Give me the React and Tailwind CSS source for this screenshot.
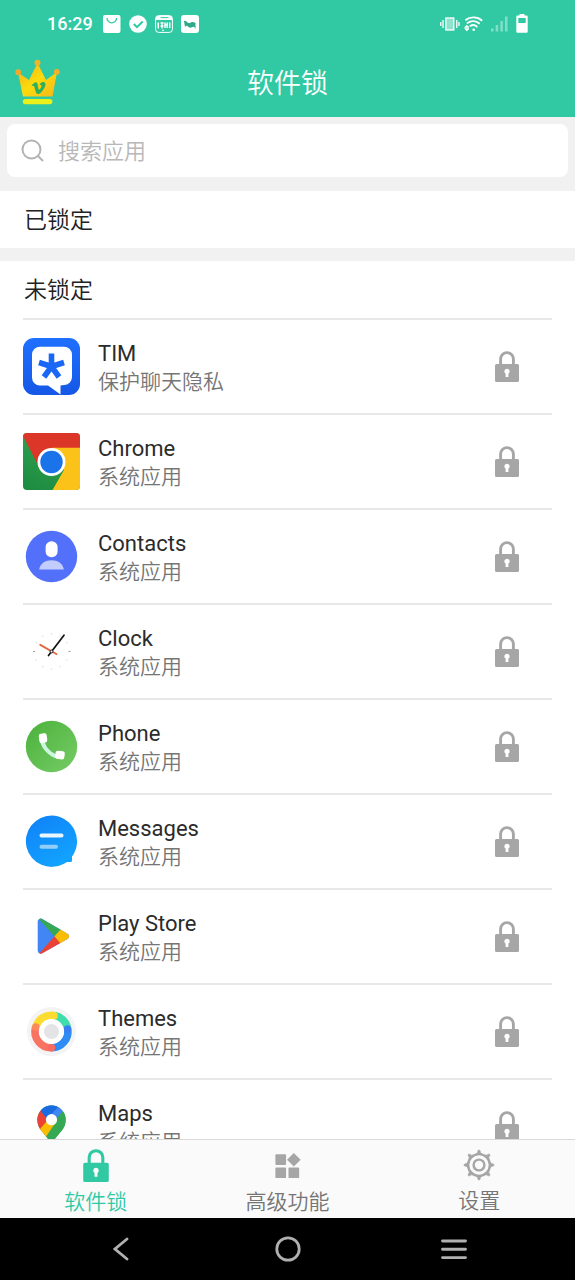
import { FaVimeoV } from "react-icons/fa";

function Crown() {
  return (
    <svg width="46" height="46" viewBox="0 0 46 46" aria-hidden="true">
      <defs>
        <linearGradient id="gold" x1="0" y1="0" x2="1" y2="1">
          <stop offset="0" stopColor="#f5a623" />
          <stop offset="0.5" stopColor="#fbdc0c" />
          <stop offset="1" stopColor="#f7b51a" />
        </linearGradient>
      </defs>
      <path d="M3 13.5 L14 21 L22.5 4 L31 21 L42 13 L37.5 37.5 H8 Z" fill="url(#gold)" />
      <circle cx="3.2" cy="13.2" r="2.9" fill="#f3a72c" />
      <circle cx="22.5" cy="3.8" r="3" fill="#f0b429" />
      <circle cx="41.8" cy="12.8" r="2.9" fill="#f3b02c" />
      <rect x="7.8" y="40" width="29.6" height="5.2" rx="2.6" fill="#e9f01c" />
      <FaVimeoV x="15.5" y="21" width="14.5" height="15.5" color="#2fae5d" />
    </svg>
  );
}

function Lock({ className }) {
  return (
    <svg viewBox="0 0 24 31" className={className} fill="none" aria-hidden="true">
      <path d="M5.6 14 V8 a6.4 6.4 0 0 1 12.8 0 V14" stroke="currentColor" strokeWidth="2.9" />
      <path
        fillRule="evenodd"
        fill="currentColor"
        d="M1.5 13 H22.5 a1.5 1.5 0 0 1 1.5 1.5 V29.5 a1.5 1.5 0 0 1 -1.5 1.5 H1.5 a1.5 1.5 0 0 1 -1.5 -1.5 V14.5 a1.5 1.5 0 0 1 1.5 -1.5 Z M12 17.7 a2.6 2.6 0 0 0 -1.4 4.8 V26 h2.8 V22.5 A2.6 2.6 0 0 0 12 17.7 Z"
      />
    </svg>
  );
}

function StatusBar() {
  return (
    <div className="flex h-[47px] items-center justify-between px-[47px] text-white">
      <div className="flex items-center gap-2">
        <span className="mr-0.5 text-[18px] font-medium">16:29</span>
        <svg width="18" height="18" viewBox="0 0 18 18" aria-hidden="true">
          <rect width="17.5" height="18" rx="2" fill="#fff" />
          <path d="M4 3 a4.8 4.8 0 0 0 9.6 0" fill="none" stroke="#30c9a3" strokeWidth="1.3" />
        </svg>
        <svg width="18" height="18" viewBox="0 0 18 18" aria-hidden="true">
          <circle cx="9" cy="9" r="8.8" fill="#fff" />
          <path d="M4.8 9 L8 12.2 L13.7 6.5" fill="none" stroke="#30c9a3" strokeWidth="2" />
        </svg>
        <svg width="18" height="18" viewBox="0 0 18 18" fill="none" stroke="#fff" aria-hidden="true">
          <rect x="0.6" y="0.6" width="16.8" height="16.8" rx="3" />
          <path d="M1 3 a2 2 0 0 1 2 -2 H15 a2 2 0 0 1 2 2 V5 H1 Z" fill="#fff" stroke="none" />
          <path d="M5.5 2.600 h8" stroke="#30c9a3" />
          <path d="M3.3 7.5 V13.5 M5.5 8 h3 M7 8 V13.5 M5.5 11 h3 M10 7.5 V13 M12.2 7.5 V13 M10 10 h2.200 M14.7 7.5 V13" strokeWidth="1.5" />
          <path d="M7 15.3 h2" />
        </svg>
        <svg width="18" height="18" viewBox="0 0 18 18" aria-hidden="true">
          <rect width="18" height="18" rx="3" fill="#fff" />
          <path d="M3 6 C5.5 5 6.5 9 9 8 C10.5 7 11.5 6.5 14.5 8 V14 C12.5 9.5 11 13.5 8.5 12.5 C6 11.5 6 9.5 4 12 Z" fill="#30a98a" />
        </svg>
      </div>
      <div className="flex items-center">
        <svg width="20" height="16" viewBox="0 0 20 16" fill="none" stroke="#fff" strokeWidth="1.3" aria-hidden="true">
          <rect x="5.8" y="2" width="8" height="12" fill="#8ee3cd" />
          <path d="M3 4 V12 M0.8 6 V10 M16.8 4 V12 M19 6 V10" />
        </svg>
        <svg className="ml-1" width="19" height="16" viewBox="0 0 19 16" fill="none" stroke="#fff" strokeWidth="1.9" strokeLinecap="round" aria-hidden="true">
          <path d="M2 3.8 C6 0.5 13.5 0.5 17.5 4.3 M3.5 7 C7 4.3 12 4.5 15 7.3 M6.5 9.8 C8.5 8.800 11 9 12.7 10.5" />
          <path d="M1 11 L2.8 9.5 L4.6 11 Z M1 13 L2.8 14.700 L4.6 13 Z" strokeWidth="1" fill="#fff" />
          <circle cx="9.7" cy="13.7" r="1.3" fill="#fff" stroke="none" />
        </svg>
        <svg className="ml-2" width="17" height="16" viewBox="0 0 17 16" fill="#83dec7" aria-hidden="true">
          <rect x="0" y="12.5" width="2.5" height="3" />
          <rect x="4.7" y="9" width="2.5" height="6.5" />
          <rect x="9.4" y="5" width="2.5" height="10.5" />
          <rect x="14" y="0.5" width="2.5" height="15" />
        </svg>
        <svg className="ml-2" width="12" height="19" viewBox="0 0 12 19" aria-hidden="true">
          <path fillRule="evenodd" fill="#fff" d="M3.5 0 h5 v1.5 H10.5 a1.2 1.2 0 0 1 1.2 1.2 V17.5 a1.2 1.2 0 0 1 -1.2 1.2 H1.5 a1.2 1.2 0 0 1 -1.2 -1.2 V2.7 A1.2 1.2 0 0 1 1.5 1.5 H3.5 Z M2.3 4 V9 H9.7 V4 Z" />
        </svg>
      </div>
    </div>
  );
}

function TimIcon() {
  return (
    <>
      <defs>
        <linearGradient id="tim" x1="0" y1="0" x2="0" y2="1">
          <stop offset="0" stopColor="#1f70ff" />
          <stop offset="1" stopColor="#1557e6" />
        </linearGradient>
      </defs>
      <rect width="57" height="57" rx="11" fill="url(#tim)" />
      <path d="M17 8.7 H41 a8 8 0 0 1 8 8 V39 a8 8 0 0 1 -8 8 L37.5 47.5 V56.5 L25 47.5 H17 a8 8 0 0 1 -8 -8 V16.7 a8 8 0 0 1 8 -8 Z" fill="#fff" />
      <path d="M28.5 28.5 V15.5 M28.5 28.5 L41 24.5 M28.5 28.5 L36 39 M28.5 28.5 L21 39 M28.5 28.5 L16 24.5" stroke="#1a66f5" strokeWidth="5.6" />
    </>
  );
}

function ChromeIcon() {
  return (
    <>
      <defs>
        <clipPath id="chromeClip">
          <rect width="57" height="57" rx="4" />
        </clipPath>
        <linearGradient id="chromeGreen" x1="0" y1="1" x2="0.4" y2="0">
          <stop offset="0" stopColor="#1d8a40" />
          <stop offset="1" stopColor="#2fa350" />
        </linearGradient>
      </defs>
      <g clipPath="url(#chromeClip)">
        <rect width="57" height="57" fill="url(#chromeGreen)" />
        <path d="M0 0 H57 V15 H28.5 L16 34 L0 3 Z" fill="#dc3629" />
        <path d="M28.5 14.7 H57 V57 H29.5 L41 37 Z" fill="#fbc219" />
      </g>
      <circle cx="28.5" cy="29" r="14" fill="#fff" />
      <circle cx="28.5" cy="29" r="11.2" fill="#1a73e8" />
    </>
  );
}

function ContactsIcon() {
  return (
    <>
      <circle cx="28.5" cy="28.5" r="25.7" fill="#5270fa" />
      <rect x="22.6" y="13.2" width="12" height="16" rx="5.8" fill="#fff" />
      <path d="M16.2 41.5 C17.5 29 39.5 29 40.8 41.5 Z" fill="#c3cdfd" />
    </>
  );
}

function ClockIcon() {
  return (
    <>
      <g stroke="#e3e3e3" strokeWidth="1.5">
        {[30, 60, 120, 150, 210, 240, 300, 330, 0, 180].map((angle) => (
          <path key={angle} d="M28.5 10.2 V11.6" transform={`rotate(${angle} 28.5 28.5)`} />
        ))}
      </g>
      <path d="M10 28.5 h2 M45.5 28.5 h2" stroke="#999" strokeWidth="1.2" />
      <path d="M17.3 21.8 L33.3 31" stroke="#e0673f" strokeWidth="2" strokeLinecap="round" />
      <path d="M25.5 32.5 L41 12.2" stroke="#111" strokeWidth="1.7" strokeLinecap="round" />
      <circle cx="28.5" cy="28.5" r="1.4" fill="#fff" stroke="#111" />
    </>
  );
}

function PhoneIcon() {
  return (
    <>
      <defs>
        <linearGradient id="phone" x1="0" y1="0" x2="1" y2="1">
          <stop offset="0" stopColor="#4bb13b" />
          <stop offset="1" stopColor="#76cc66" />
        </linearGradient>
      </defs>
      <circle cx="28.5" cy="28.5" r="25.7" fill="url(#phone)" />
      <path d="M16.500 19 C16.5 31 29 42 39 41 L34.5 36.5 C29 35.5 22.5 29 22 24 Z" fill="#cdf5e0" />
      <rect x="16" y="15.5" width="8" height="9.3" rx="2.2" fill="#fff" transform="rotate(-7 20 20)" />
      <rect x="32.3" y="33" width="9.3" height="8.2" rx="2.2" fill="#fff" transform="rotate(8 37 37)" />
    </>
  );
}

function MessagesIcon() {
  return (
    <>
      <defs>
        <linearGradient id="msg" x1="0" y1="0" x2="0.6" y2="1">
          <stop offset="0" stopColor="#1080f8" />
          <stop offset="1" stopColor="#12a3ff" />
        </linearGradient>
      </defs>
      <path d="M28.5 2.5 a25.7 25.7 0 1 0 12.5 48.2 L44 49 H47.5 a1.5 1.5 0 0 0 1.5 -1.5 V43.5 A25.7 25.7 0 0 0 28.5 2.5 Z" fill="url(#msg)" />
      <path d="M18.5 22.5 H38.5" stroke="#e8f6ff" strokeWidth="4" strokeLinecap="round" />
      <path d="M18.5 33.8 H33" stroke="#93cefb" strokeWidth="4" strokeLinecap="round" />
    </>
  );
}

function PlayIcon() {
  return (
    <>
      <defs>
        <clipPath id="playClip">
          <path d="M14.7 13.5 a3 3 0 0 1 4.5 -2.5 L44.5 25.8 a3 3 0 0 1 0 5.2 L19.2 45.3 a3 3 0 0 1 -4.5 -2.5 Z" />
        </clipPath>
      </defs>
      <g clipPath="url(#playClip)">
        <rect x="14" y="8" width="34" height="40" fill="#4285f4" />
        <path d="M14 9 L31.5 28.5 L50 9 Z" fill="#34a853" />
        <path d="M14 48 L31.5 28.2 L50 48 Z" fill="#ea4335" />
        <path d="M31.5 28.3 L38 21 L50 28 L37.5 35.5 Z" fill="#fbbc04" />
      </g>
    </>
  );
}

function ThemesIcon() {
  return (
    <>
      <circle cx="28.5" cy="28.5" r="24.5" fill="#f4f4f4" />
      <g fill="none" strokeWidth="7.6">
        <path d="M12.5 24.5 A16.2 16.2 0 0 0 28.5 44.7" stroke="#f97362" />
        <path d="M44.7 26 A16.2 16.2 0 0 1 28.5 44.7" stroke="#2f8cf5" />
        <path d="M31 12.5 A16.2 16.2 0 0 1 44.7 26" stroke="#3fdcae" />
        <path d="M12.8 24 A16.2 16.2 0 0 1 31 12.5" stroke="#fddc32" />
      </g>
      <circle cx="44.5" cy="26" r="3.8" fill="#3a7ff2" />
      <circle cx="31" cy="12.7" r="3.8" fill="#fddc32" />
      <circle cx="12.8" cy="24" r="3.8" fill="#fb8a5c" />
      <circle cx="28.5" cy="44.7" r="3.8" fill="#f96a62" />
      <circle cx="28.5" cy="28.5" r="12.4" fill="#fff" />
      <circle cx="28.5" cy="28.5" r="7.5" fill="#e4e4e6" />
    </>
  );
}

function MapsIcon() {
  return (
    <>
      <defs>
        <clipPath id="pinClip">
          <path d="M28.5 7.5 A14.2 14.2 0 0 1 42.7 21.7 C42.7 34 30.5 37 30 47 a1.5 1.5 0 0 1 -3 0 C26.5 37 14.3 34 14.3 21.7 A14.2 14.2 0 0 1 28.5 7.5 Z" />
        </clipPath>
      </defs>
      <g clipPath="url(#pinClip)">
        <rect x="12" y="5" width="33" height="45" fill="#34a853" />
        <path d="M10 33 L16 11 L28.5 22 L20 31 L17 34 L12 32 Z" fill="#ea4335" />
        <path d="M16.5 31.5 L28.5 18 L35 25 L22 40 Z" fill="#fbbc04" />
        <path d="M22.5 39.5 L41 12 L48 20 L40 50 L24 50 Z" fill="#34a853" />
        <path d="M16 11 L28.5 3 L41 12 L30 24 Z" fill="#4285f4" />
        <path d="M16 11 L28.5 3 L35 9 L24 21 Z" fill="#1a6ae0" />
      </g>
      <circle cx="28.5" cy="21.7" r="5.6" fill="#fff" />
    </>
  );
}

const apps = [
  { name: "TIM", note: "保护聊天隐私", Icon: TimIcon },
  { name: "Chrome", note: "系统应用", Icon: ChromeIcon },
  { name: "Contacts", note: "系统应用", Icon: ContactsIcon },
  { name: "Clock", note: "系统应用", Icon: ClockIcon },
  { name: "Phone", note: "系统应用", Icon: PhoneIcon },
  { name: "Messages", note: "系统应用", Icon: MessagesIcon },
  { name: "Play Store", note: "系统应用", Icon: PlayIcon },
  { name: "Themes", note: "系统应用", Icon: ThemesIcon },
  { name: "Maps", note: "系统应用", Icon: MapsIcon },
];

function AppRow({ name, note, Icon }) {
  return (
    <li className="flex h-[95px] items-center border-t-2 border-[#e8e8e8]">
      <svg width="57" height="57" viewBox="0 0 57 57" className="shrink-0" aria-hidden="true">
        <Icon />
      </svg>
      <div className="ml-[18px] min-w-0 flex-1 pt-0.5">
        <p className="truncate text-[22px] leading-[29px] text-[#2b2b2b]">{name}</p>
        <p className="truncate text-[21px] leading-[29px] font-[350] text-[#757575]">{note}</p>
      </div>
      <button type="button" aria-label={name} className="flex h-full w-[90px] items-center justify-center text-[#a6a6a6]">
        <Lock className="h-[31px] w-6" />
      </button>
    </li>
  );
}

function Tab({ label, active, children }) {
  return (
    <button
      type="button"
      className={`flex flex-1 flex-col items-center gap-[5px] pt-[9px] ${active ? "text-[#30c9a3]" : "text-[#a6a6a6]"}`}
    >
      {children}
      <span className={`text-[21px] leading-[31px] font-[350] ${active ? "" : "text-[#757575]"}`}>{label}</span>
    </button>
  );
}

export default function App() {
  return (
    <div className="flex h-screen flex-col overflow-hidden bg-[#f1f1f1] font-['Roboto','Noto_Sans_CJK_SC',sans-serif]">
      <header className="shrink-0 bg-[#30c9a3]">
        <StatusBar />
        <div className="grid h-[70px] grid-cols-[61px_1fr_61px] items-center">
          <button type="button" aria-label="VIP" className="pl-[15px]">
            <Crown />
          </button>
          <h1 className="pt-1 text-center text-[27px] leading-[40px] font-[350] text-white">软件锁</h1>
        </div>
      </header>

      <main className="min-h-0 flex-1 overflow-y-auto [scrollbar-width:none]">
        <div className="px-[7px] pt-[7px] pb-[14px]">
          <label className="flex h-[53px] items-center gap-[14px] rounded-lg bg-white px-[14px]">
            <svg width="23" height="23" viewBox="0 0 23 23" fill="none" stroke="#b3b3b3" strokeWidth="2" aria-hidden="true">
              <circle cx="10.5" cy="10.5" r="9" />
              <path d="M17 17 L22 22" />
            </svg>
            <input
              type="text"
              aria-label="搜索应用"
              placeholder="搜索应用"
              className="min-w-0 flex-1 bg-transparent pt-0.5 text-[22px] leading-[32px] font-[350] outline-none placeholder:text-[#b8b8b8]"
            />
          </label>
        </div>

        <h2 className="mb-[13px] bg-white px-6 pt-0.5 text-[23px] leading-[55px] font-[350] text-[#222]">已锁定</h2>

        <section className="bg-white">
          <h2 className="px-6 pt-0.5 text-[23px] leading-[55px] font-[350] text-[#222]">未锁定</h2>
          <ul className="mx-[23px]">
            {apps.map((app) => (
              <AppRow key={app.name} {...app} />
            ))}
          </ul>
        </section>
      </main>

      <nav className="flex h-[79px] shrink-0 border-t border-[#d9d9d9] bg-[#fafafa]">
        <Tab label="软件锁" active>
          <Lock className="h-[34px] w-[26px]" />
        </Tab>
        <Tab label="高级功能">
          <svg width="26" height="34" viewBox="0 0 26 34" fill="currentColor" aria-hidden="true">
            <rect x="0" y="5.500" width="11" height="11" rx="1" />
            <rect x="0" y="19" width="11" height="11" rx="1" />
            <rect x="13.5" y="19" width="11" height="11" rx="1" />
            <path d="M19 4 L26 11 L19 18 L12 11 Z" />
          </svg>
        </Tab>
        <Tab label="设置">
          <svg width="32" height="32" viewBox="0 0 32 32" fill="none" stroke="currentColor" strokeWidth="2.4" aria-hidden="true">
            <circle cx="16" cy="16" r="10.9" />
            <circle cx="16" cy="16" r="5.4" />
            {[0, 45, 90, 135, 180, 225, 270, 315].map((angle) => (
              <path key={angle} d="M13 5 Q15 4 15 2 a1 1 0 0 1 2 0 Q17 4 19 5 Z" fill="currentColor" strokeWidth="0.8" transform={`rotate(${angle} 16 16)`} />
            ))}
          </svg>
        </Tab>
      </nav>

      <footer className="flex h-[62px] shrink-0 items-center justify-between bg-black px-[101px] text-[#b0b0b0]">
        <button type="button" aria-label="返回" className="flex size-10 items-center justify-center">
          <svg width="16" height="24" viewBox="0 0 16 24" fill="none" stroke="currentColor" strokeWidth="2.8" strokeLinecap="round" aria-hidden="true">
            <path d="M14 2 L2 12 L14 22" />
          </svg>
        </button>
        <button type="button" aria-label="主页" className="flex size-10 items-center justify-center">
          <svg width="26" height="26" viewBox="0 0 26 26" fill="none" stroke="currentColor" strokeWidth="2.8" aria-hidden="true">
            <circle cx="13" cy="13" r="11.2" />
          </svg>
        </button>
        <button type="button" aria-label="最近任务" className="flex size-10 items-center justify-center">
          <svg width="26" height="22" viewBox="0 0 26 22" fill="none" stroke="currentColor" strokeWidth="2.9" strokeLinecap="round" aria-hidden="true">
            <path d="M1.5 3 H24.5 M1.5 11.3 H24.5 M1.5 19.6 H24.5" />
          </svg>
        </button>
      </footer>
    </div>
  );
}
